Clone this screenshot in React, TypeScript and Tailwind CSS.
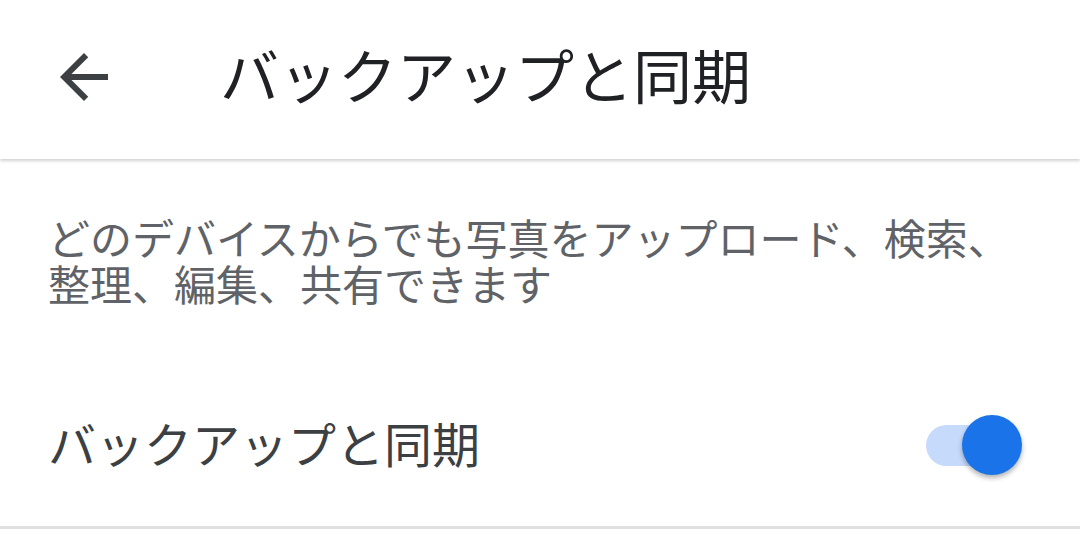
const font = { fontFamily: '"Noto Sans CJK JP", "Noto Sans", sans-serif' }

function BackArrow() {
  return (
    <svg viewBox="0 0 24 24" className="w-[72px] h-[72px] fill-[#3c4043]">
      <path d="M20 11H7.83l5.59-5.59L12 4l-8 8 8 8 1.41-1.41L7.83 13H20v-2z" />
    </svg>
  )
}

function Toggle() {
  return (
    <div className="relative w-[96px] h-[60px] flex items-center mt-[6px]">
      <div className="w-[84px] h-[41px] rounded-full bg-[#c6dafc]" />
      <div className="absolute right-0 top-0 w-[60px] h-[60px] rounded-full bg-[#1a73e8] shadow-[0_3px_5px_rgba(0,0,0,0.3)]" />
    </div>
  )
}

export default function App() {
  return (
    <div className="w-[1080px] h-[559px] bg-white overflow-hidden" style={font}>
      <header className="h-[159px] flex items-center shadow-[0_2px_3px_rgba(0,0,0,0.18)] relative z-10">
        <div className="w-[220px] flex items-center pl-[48px] -mt-[6px]">
          <BackArrow />
        </div>
        <h1 className="text-[59px] leading-none text-[#202124] -mt-[12px]">バックアップと同期</h1>
      </header>

      <p className="px-[48px] pt-[55px] text-[42px] leading-[46px] text-[#5f6368]">
        どのデバイスからでも写真をアップロード、検索、
        <br />
        整理、編集、共有できます
      </p>

      <div className="flex items-center justify-between pl-[48px] pr-[58px] pt-[103px] pb-[51px] border-b-[3px] border-[#e0e0e0]">
        <span className="text-[48px] leading-[60px] text-[#3c4043]">バックアップと同期</span>
        <Toggle />
      </div>
    </div>
  )
}
